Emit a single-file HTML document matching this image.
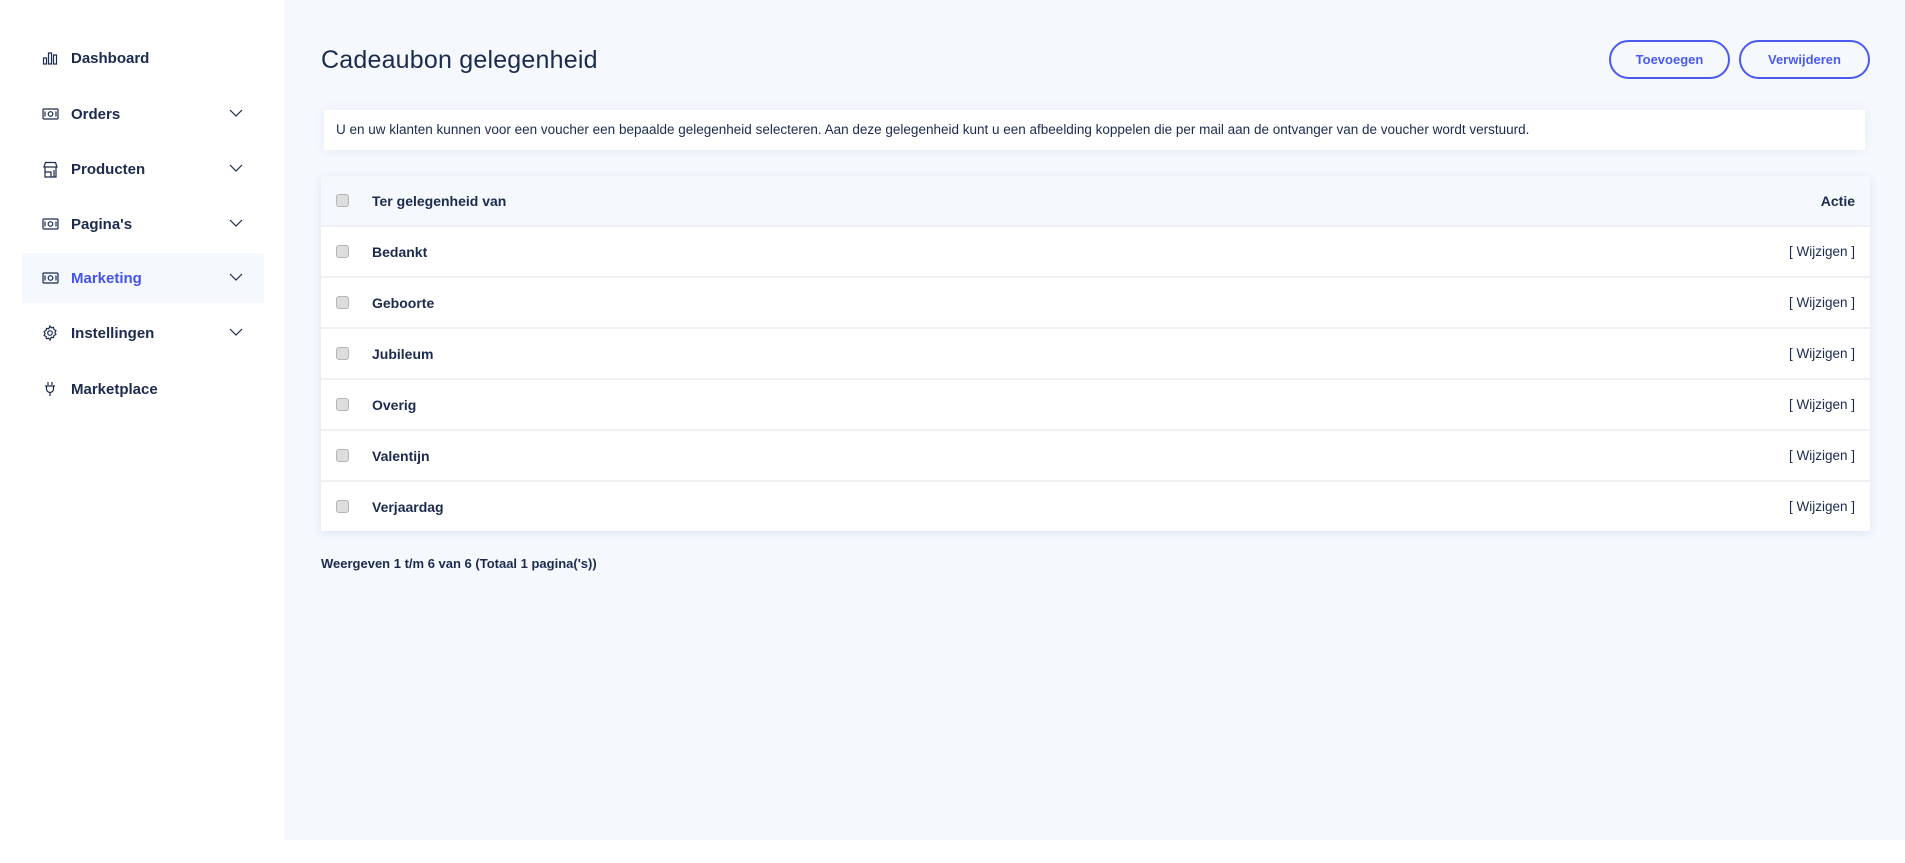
<!DOCTYPE html>
<html><head><meta charset="utf-8"><style>
*{box-sizing:border-box;margin:0;padding:0}
body{width:1905px;height:863px;background:#fff;font-family:"Liberation Sans",sans-serif;color:#1b2a4e;position:relative;overflow:hidden}
.side{position:absolute;left:0;top:0;width:284px;height:863px;background:#fff}
.main{position:absolute;left:284px;top:0;width:1621px;height:840px;background:#f5f8fd}
.nav{position:absolute;left:22px;width:242px;height:50px;display:flex;align-items:center;font-size:15px;font-weight:bold;color:#1b2a4e}
.nav svg.ic{position:absolute;left:20px;top:17px}
.nav span{position:absolute;left:49px}
.nav svg.ch{position:absolute;left:207px;top:19px}
.nav.act{background:#f5f8fd;color:#4353f0}
h1{position:absolute;left:321px;top:46px;font-size:25px;font-weight:normal;color:#1b2a4e;letter-spacing:0.2px}
.btn{position:absolute;top:40px;height:39px;border:2px solid #4a5af0;border-radius:20px;color:#4a5af0;font-size:13px;font-weight:bold;display:flex;align-items:center;justify-content:center;background:transparent}
.info{position:absolute;left:324px;top:110px;width:1541px;height:40px;background:#fff;box-shadow:0 0 10px rgba(60,80,150,0.08);font-size:13.5px;padding-left:12px;line-height:40px}
.tbl{position:absolute;left:321px;top:176px;width:1549px;background:#fff;box-shadow:0 2px 8px rgba(60,80,150,0.12)}
.row{height:51px;border-top:2px solid #eef0f4;position:relative;font-size:14px;font-weight:bold;display:flex;align-items:center}
.row.h{background:#f5f8fd;border-top:none;height:49px}
.cb{position:absolute;left:15px;width:13px;height:13px;background:#ddd;border:1px solid #b5b5b5;border-radius:3px}
.nm{position:absolute;left:51px}
.ac{position:absolute;right:15px;font-weight:normal;font-size:13.5px}
.row.h .ac{font-weight:bold;font-size:14px}
.foot{position:absolute;left:321px;top:556px;font-size:13px;font-weight:bold}
</style></head><body>
<div class="side"></div>
<div class="main"></div>

<div class="nav" style="top:33px"><svg class="ic" width="16" height="16" viewBox="0 0 16 16" fill="none" stroke="#1b2a4e" stroke-width="1.2"><rect x="1.5" y="8" width="3" height="6"/><rect x="6.5" y="3" width="3" height="11"/><rect x="11.5" y="5" width="3" height="9"/></svg><span>Dashboard</span></div>
<div class="nav" style="top:89px"><svg class="ic" width="17" height="16" viewBox="0 0 17 16" fill="none" stroke="#1b2a4e" stroke-width="1.2"><rect x="1" y="3" width="15" height="10" rx="1"/><circle cx="8.5" cy="8" r="2.3"/><path d="M3 5.5v5M14 5.5v5"/></svg><span>Orders</span><svg class="ch" width="14" height="10" viewBox="0 0 14 10" fill="none" stroke="#1b2a4e" stroke-width="1.2"><path d="M1 2l6 6 6-6"/></svg></div>
<div class="nav" style="top:144px"><svg class="ic" width="17" height="17" viewBox="0 0 17 17" fill="none" stroke="#1b2a4e" stroke-width="1.2"><path d="M2 6L3.5 1.5h10L15 6H2zM3 6v10h11V6M3 11h6v5M12 9v7"/></svg><span>Producten</span><svg class="ch" width="14" height="10" viewBox="0 0 14 10" fill="none" stroke="#1b2a4e" stroke-width="1.2"><path d="M1 2l6 6 6-6"/></svg></div>
<div class="nav" style="top:199px"><svg class="ic" width="17" height="16" viewBox="0 0 17 16" fill="none" stroke="#1b2a4e" stroke-width="1.2"><rect x="1" y="3" width="15" height="10" rx="1"/><circle cx="8.5" cy="8" r="2.3"/><path d="M3 5.5v5M14 5.5v5"/></svg><span>Pagina's</span><svg class="ch" width="14" height="10" viewBox="0 0 14 10" fill="none" stroke="#1b2a4e" stroke-width="1.2"><path d="M1 2l6 6 6-6"/></svg></div>
<div class="nav act" style="top:253px"><svg class="ic" width="17" height="16" viewBox="0 0 17 16" fill="none" stroke="#1b2a4e" stroke-width="1.2"><rect x="1" y="3" width="15" height="10" rx="1"/><circle cx="8.5" cy="8" r="2.3"/><path d="M3 5.5v5M14 5.5v5"/></svg><span>Marketing</span><svg class="ch" width="14" height="10" viewBox="0 0 14 10" fill="none" stroke="#1b2a4e" stroke-width="1.2"><path d="M1 2l6 6 6-6"/></svg></div>
<div class="nav" style="top:308px"><svg class="ic" width="16" height="16" viewBox="0 0 16 16" fill="none" stroke="#1b2a4e" stroke-width="1.2"><path d="M8 1l1.3 1.8 2.2-.5.4 2.2 2 1-1 2 1 2-2 1-.4 2.2-2.2-.5L8 15l-1.3-1.8-2.2.5-.4-2.2-2-1 1-2-1-2 2-1 .4-2.2 2.2.5z"/><circle cx="8" cy="8" r="2.3"/></svg><span>Instellingen</span><svg class="ch" width="14" height="10" viewBox="0 0 14 10" fill="none" stroke="#1b2a4e" stroke-width="1.2"><path d="M1 2l6 6 6-6"/></svg></div>
<div class="nav" style="top:364px"><svg class="ic" width="16" height="16" viewBox="0 0 16 16" fill="none" stroke="#1b2a4e" stroke-width="1.2"><path d="M6 1v3M10 1v3M3 5h10M4.5 5v3a3.5 3.5 0 0 0 7 0V5M8 11.5V15"/></svg><span>Marketplace</span></div>

<h1>Cadeaubon gelegenheid</h1>
<div class="btn" style="left:1609px;width:121px">Toevoegen</div>
<div class="btn" style="left:1739px;width:131px">Verwijderen</div>

<div class="info">U en uw klanten kunnen voor een voucher een bepaalde gelegenheid selecteren. Aan deze gelegenheid kunt u een afbeelding koppelen die per mail aan de ontvanger van de voucher wordt verstuurd.</div>

<div class="tbl">
<div class="row h"><div class="cb"></div><div class="nm">Ter gelegenheid van</div><div class="ac">Actie</div></div>
<div class="row"><div class="cb"></div><div class="nm">Bedankt</div><div class="ac">[ Wijzigen ]</div></div>
<div class="row"><div class="cb"></div><div class="nm">Geboorte</div><div class="ac">[ Wijzigen ]</div></div>
<div class="row"><div class="cb"></div><div class="nm">Jubileum</div><div class="ac">[ Wijzigen ]</div></div>
<div class="row"><div class="cb"></div><div class="nm">Overig</div><div class="ac">[ Wijzigen ]</div></div>
<div class="row"><div class="cb"></div><div class="nm">Valentijn</div><div class="ac">[ Wijzigen ]</div></div>
<div class="row"><div class="cb"></div><div class="nm">Verjaardag</div><div class="ac">[ Wijzigen ]</div></div>
</div>

<div class="foot">Weergeven 1 t/m 6 van 6 (Totaal 1 pagina('s))</div>
</body></html>
